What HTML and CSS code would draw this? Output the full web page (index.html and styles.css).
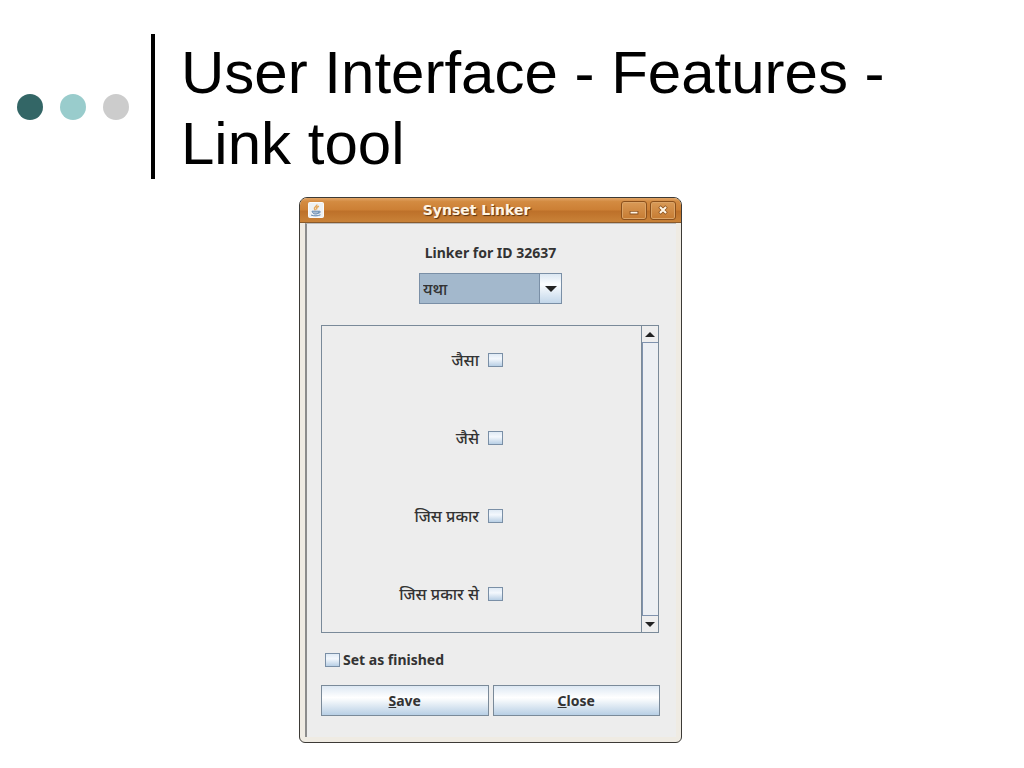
FILE: index.html
```html
<!DOCTYPE html>
<html lang="en">
<head>
<meta charset="utf-8">
<title>User Interface - Features - Link tool</title>
<link rel="stylesheet" href="styles.css">
</head>
<body>
<header class="slide-header">
  <div class="dots">
    <span class="dot dot-dark"></span>
    <span class="dot dot-teal"></span>
    <span class="dot dot-gray"></span>
  </div>
  <h1 class="slide-title">User Interface - Features -<br>Link tool</h1>
</header>
<main class="stage">
  <section class="window">
    <div class="titlebar">
      <svg class="java-icon" viewBox="0 0 16 16" aria-hidden="true">
        <rect x="0.5" y="0.5" width="15" height="15" rx="1" fill="#eef1f3" stroke="#fafafa"/>
        <path d="M8.800 2.500C9.500 4.200 5.500 5 6.500 7L7.500 8.200M11 4.200C8.500 5 8.200 6.200 9 7.500" fill="none" stroke="#e5a85c" stroke-width="1.500"/>
        <path d="M4 9.200H10.800C10.800 11.200 9.500 12 7.500 12S4.500 11 4 9.200ZM10.800 9.300C13 8.700 13 11 10 11.300M3 13C5.500 14.200 10 14.200 12.500 12.800" fill="#a9bdd2" stroke="#6c8fb5" stroke-width="1"/>
      </svg>
      <h2 class="window-title">Synset Linker</h2>
      <div class="window-buttons">
        <button class="window-button" type="button" aria-label="Minimize">
          <svg viewBox="0 0 16 16" aria-hidden="true"><path d="M3 11H13" stroke="#8a4f1c" stroke-width="4"/><path d="M4 11H12" stroke="#fff6e6" stroke-width="2"/></svg>
        </button>
        <button class="window-button" type="button" aria-label="Close window">
          <svg viewBox="0 0 16 16" aria-hidden="true"><path d="M4 4L12 12M12 4L4 12" stroke="#8a4f1c" stroke-width="4"/><path d="M4.500 4.500L11.500 11.500M11.500 4.500L4.500 11.500" stroke="#fff6e6" stroke-width="2.400"/></svg>
        </button>
      </div>
    </div>
    <form class="panel">
      <label class="heading" for="word">Linker for ID 32637</label>
      <div class="combo">
        <select id="word" class="combo-select hindi"><option>यथा</option></select>
        <span class="combo-arrow"><svg class="arrow" viewBox="0 0 12 6" aria-hidden="true"><path d="M0 0H12L6 6Z"/></svg></span>
      </div>
      <div class="list">
        <div class="rows hindi">
          <div class="row"><label for="w1">जैसा</label><input class="check" id="w1" type="checkbox"></div>
          <div class="row"><label for="w2">जैसे</label><input class="check" id="w2" type="checkbox"></div>
          <div class="row"><label for="w3">जिस प्रकार</label><input class="check" id="w3" type="checkbox"></div>
          <div class="row"><label for="w4">जिस प्रकार से</label><input class="check" id="w4" type="checkbox"></div>
        </div>
        <div class="scrollbar">
          <button class="scroll-button" type="button" aria-label="Scroll up"><svg class="small-arrow" viewBox="0 0 10 5" aria-hidden="true"><path d="M0 5H10L5 0Z"/></svg></button>
          <div class="thumb"></div>
          <button class="scroll-button" type="button" aria-label="Scroll down"><svg class="small-arrow" viewBox="0 0 10 5" aria-hidden="true"><path d="M0 0H10L5 5Z"/></svg></button>
        </div>
      </div>
      <div class="finished"><input class="check" id="finished" type="checkbox"><label for="finished">Set as finished</label></div>
      <div class="actions">
        <button class="action" type="button"><u>S</u>ave</button>
        <button class="action" type="button"><u>C</u>lose</button>
      </div>
    </form>
  </section>
</main>
</body>
</html>
```
FILE: styles.css
```css
* { box-sizing: border-box; }
body {
  margin: 0;
  background: #fff;
  color: #000;
  font-family: "Liberation Sans", Arial, sans-serif;
}
.slide-header {
  display: flex;
  align-items: center;
  padding: 34px 16px 0 17px;
}
.dots {
  display: flex;
  gap: 17px;
  padding-right: 22px;
}
.dot {
  width: 26px;
  height: 26px;
  border-radius: 50%;
}
.dot-dark { background: #336666; }
.dot-teal { background: #99cccc; }
.dot-gray { background: #cccccc; }
.slide-title {
  margin: 0;
  padding: 3px 0 0 26px;
  border-left: 4px solid #000;
  font-size: 60px;
  font-weight: 400;
  line-height: 71px;
}
.stage {
  display: flex;
  justify-content: center;
  padding: 18px 43px 24px 0;
}
.window {
  flex: 0 1 383px;
  border: 1px solid #3c3a36;
  border-radius: 8px 8px 6px 6px;
  background: #efebe3;
  overflow: hidden;
  color: #333;
  font: 700 14px/18px "Noto Sans", "Open Sans", sans-serif;
}
.titlebar {
  display: flex;
  align-items: center;
  height: 25px;
  padding: 0 5px 0 8px;
  border-bottom: 1px solid #8a5a2a;
  background: linear-gradient(#e2a567 0, #d38b41 15%, #cc7f34 50%, #bd7029 54%, #c98238 100%);
}
.java-icon {
  width: 16px;
  height: 16px;
}
.window-title {
  flex: 1;
  margin: 0;
  padding-left: 8px;
  color: #fff5e4;
  font: 700 14px/18px "DejaVu Sans", sans-serif;
  text-align: center;
  text-shadow: 1px 1px 1px #5a3210;
}
.window-buttons {
  display: flex;
  gap: 3px;
}
.window-button {
  display: grid;
  place-items: center;
  width: 26px;
  height: 19px;
  padding: 0;
  border: 1px solid #8b501c;
  border-radius: 3px;
  background: linear-gradient(#d99a57, #c67b32);
  box-shadow: inset 0 0 0 1px #dba467;
}
.window-button svg {
  width: 14px;
  height: 14px;
}
.panel {
  display: flex;
  flex-direction: column;
  margin: 0 5px 5px;
  padding: 20px 16px 21px 14px;
  border-left: 2px solid #8c8c8c;
  border-top: 1px solid #bdbdbd;
  background: #ededed;
}
.heading {
  text-align: center;
}
.combo {
  display: grid;
  grid-template-columns: 1fr 22px;
  align-self: center;
  width: 143px;
  height: 31px;
  margin-top: 11px;
  border: 1px solid #7a8fa6;
}
.combo-select {
  grid-area: 1 / 1 / 2 / 3;
  appearance: none;
  padding: 0 24px 0 3px;
  border: 0;
  border-radius: 0;
  background: #a3b8cc;
  color: #333;
}
.hindi {
  font: 500 16px/20px "Noto Sans", sans-serif;
}
.combo-arrow {
  grid-area: 1 / 2;
  display: grid;
  place-items: center;
  border-left: 1px solid #7a8fa6;
  background: linear-gradient(#dbe7f2, #fbfdff 35%, #c3d7ea);
  pointer-events: none;
}
.arrow {
  width: 12px;
  height: 6px;
}
.small-arrow {
  width: 10px;
  height: 5px;
}
.arrow, .small-arrow { fill: #222; }
.list {
  display: grid;
  grid-template-columns: 1fr 17px;
  margin: 21px 1px 0 0;
  border: 1px solid #7a8a99;
}
.rows {
  display: grid;
  grid-auto-rows: 78px;
  height: 311px;
  margin-top: -5px;
}
.row {
  display: grid;
  grid-template-columns: 157px 15px;
  gap: 9px;
  align-items: center;
  text-align: right;
}
.check {
  appearance: none;
  width: 15px;
  height: 14px;
  margin: 0;
  border: 1px solid #7a8fa6;
  background: linear-gradient(#dfeaf5, #f4f8fd 40%, #b8cfe5);
}
.scrollbar {
  display: grid;
  grid-template-rows: 16px 1fr 16px;
  border-left: 1px solid #7a8a99;
}
.scroll-button {
  display: grid;
  place-items: center;
  padding: 0;
  border: 0;
  background: #eee;
}
.thumb {
  border: solid #7f92ad;
  border-width: 1px 0 1px 1px;
  background: #eceff3;
}
.finished {
  display: flex;
  align-items: center;
  gap: 3px;
  padding: 18px 4px 16px;
}
.actions {
  display: grid;
  grid-template-columns: 1fr 1fr;
  gap: 4px;
}
.action {
  height: 31px;
  padding: 0;
  border: 1px solid #7a8a99;
  background: linear-gradient(#dde8f3, #fff 40%, #f4f8fb 50%, #b8cfe5);
  color: #333;
  font: inherit;
}
```
